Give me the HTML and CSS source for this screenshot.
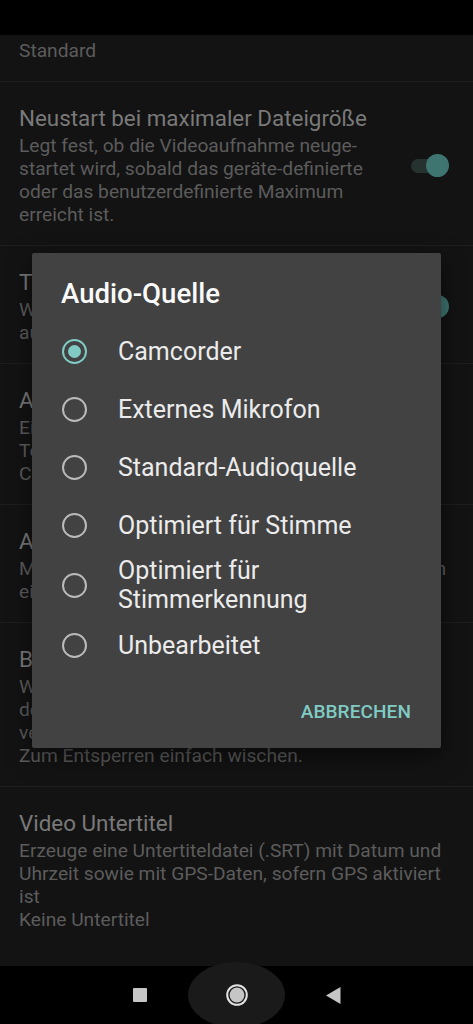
FILE: index.html
```
<!DOCTYPE html>
<html>

<head>
    <meta charset="utf-8" />
    <title>Video-Einstellungen</title>
    <link rel="stylesheet" href="styles.css">
</head>

<body>
    <div class="screen">
        <div class="status-bar"></div>

        <div class="settings">
            <div class="pref pref-tail">
                <div class="pref-text">
                    <p class="pref-summary">Standard</p>
                </div>
            </div>
            <div class="pref">
                <div class="pref-text narrow">
                    <p class="pref-title">Neustart bei maximaler Dateigröße</p>
                    <p class="pref-summary">Legt fest, ob die Videoaufnahme neuge&shy;startet wird, sobald das geräte-definierte oder das benutzerdefinierte Maximum erreicht ist.</p>
                </div>
                <span class="switch on"></span>
            </div>
            <div class="pref">
                <div class="pref-text narrow">
                    <p class="pref-title">Ton aufnehmen</p>
                    <p class="pref-summary">Wenn aktiviert, wird bei der Video-<br>aufnahme auch Ton aufgenommen.</p>
                </div>
                <span class="switch on"></span>
            </div>
            <div class="pref">
                <div class="pref-text">
                    <p class="pref-title">Audio-Quelle</p>
                    <p class="pref-summary">Eingangsquelle für die Tonaufnahme.<br>Teilweise nicht von allen Geräten unterstützt.<br>Camcorder</p>
                </div>
            </div>
            <div class="pref">
                <div class="pref-text">
                    <p class="pref-title">Audiokanäle</p>
                    <p class="pref-summary">Mono oder Stereo. Stereo ist nicht in allen Geräten<br>eingebaut.</p>
                </div>
            </div>
            <div class="pref">
                <div class="pref-text">
                    <p class="pref-title">Bildschirm bei Aufnahme sperren</p>
                    <p class="pref-summary">Wenn aktiviert, wird während der Videoaufnahme<br>der Bildschirm gesperrt, um unbeabsichtigte<br>versehentliche Berührungen zu vermeiden.<br>Zum Entsperren einfach wischen.</p>
                </div>
            </div>
            <div class="pref">
                <div class="pref-text">
                    <p class="pref-title">Video Untertitel</p>
                    <p class="pref-summary">Erzeuge eine Untertiteldatei (.SRT) mit Datum und Uhrzeit sowie mit GPS-Daten, sofern GPS aktiviert ist<br>Keine Untertitel</p>
                </div>
            </div>
        </div>

        <div class="nav-bar">
            <span class="nav-btn">
                <span class="nav-recent"></span>
            </span>
            <span class="nav-btn home">
                <svg width="22" height="22" viewBox="0 0 22 22">
                    <circle cx="11" cy="11" r="9.8" fill="none" stroke="#e2e2e2" stroke-width="2" />
                    <circle cx="11" cy="11" r="7.4" fill="#c6c6c6" />
                </svg>
            </span>
            <span class="nav-btn">
                <svg width="15" height="17" viewBox="0 0 15 17">
                    <polygon points="14.5,0 14.5,17 0,8.5" fill="#c6c6c6" />
                </svg>
            </span>
        </div>

        <!-- Auswahldialog -->
        <div class="dialog">
            <h2 class="dialog-title">Audio-Quelle</h2>
            <ul class="choices">
                <li class="choice"><span class="radio checked"></span>Camcorder</li>
                <li class="choice"><span class="radio"></span>Externes Mikrofon</li>
                <li class="choice"><span class="radio"></span>Standard-Audioquelle</li>
                <li class="choice"><span class="radio"></span>Optimiert für Stimme</li>
                <li class="choice"><span class="radio"></span>Optimiert für<br>Stimmerkennung</li>
                <li class="choice"><span class="radio"></span>Unbearbeitet</li>
            </ul>
            <div class="dialog-buttons">
                <span class="text-btn">ABBRECHEN</span>
            </div>
        </div>
    </div>
</body>

</html>
```

FILE: styles.css
```
body,
p,
h2,
ul,
li {
    margin: 0;
    padding: 0;
}

ul {
    list-style-type: none;
}

body {
    background: #000;
    font-family: Roboto, "Noto Sans", sans-serif;
}

.screen {
    position: relative;
    width: 473px;
    height: 1024px;
    overflow: hidden;
}

.status-bar {
    height: 35px;
    background: #000;
}

/* Einstellungsliste (abgedunkelt hinter dem Dialog) */
.settings {
    height: 931px;
    overflow: hidden;
    background: #131313;
}

.pref {
    display: flex;
    align-items: center;
    padding: 23px 24px 19px 19px;
    border-bottom: 1px solid #1e1e1e;
}

.pref:last-child {
    border-bottom: 0;
}

.pref-tail {
    padding-top: 4px;
}

.pref-text {
    flex: 1;
}

.pref-text.narrow {
    flex: none;
    width: 361px;
    margin-right: auto;
}

.pref-title {
    margin-bottom: 3px;
    font-size: 22.4px;
    line-height: 26px;
    color: #797979;
}

.pref-summary {
    font-size: 19.2px;
    line-height: 23px;
    color: #5c5c5c;
}

.switch {
    position: relative;
    width: 40px;
    height: 24px;
}

.switch::before {
    content: "";
    position: absolute;
    top: 5px;
    left: 2px;
    width: 36px;
    height: 14px;
    border-radius: 7px;
    background: #253230;
}

.switch::after {
    content: "";
    position: absolute;
    top: 0;
    right: 0;
    width: 23px;
    height: 23px;
    border-radius: 50%;
    background: #3e7571;
}

/* Navigationsleiste */
.nav-bar {
    display: flex;
    justify-content: center;
    height: 58px;
    background: #000;
}

.nav-btn {
    position: relative;
    display: flex;
    align-items: center;
    justify-content: center;
    width: 97px;
}

.nav-btn.home::before {
    content: "";
    position: absolute;
    top: -4px;
    left: 0;
    width: 97px;
    height: 66px;
    border-radius: 50%;
    background: #1a1a1a;
}

.nav-btn svg {
    position: relative;
}

.nav-recent {
    width: 14px;
    height: 14px;
    border-radius: 1px;
    background: #c6c6c6;
}

/* Dialog */
.dialog {
    position: absolute;
    top: 253px;
    left: 32px;
    width: 409px;
    padding-top: 24px;
    border-radius: 2px;
    background: #424242;
    box-shadow: 0 8px 24px rgba(0, 0, 0, 0.5);
}

.dialog-title {
    padding-left: 29px;
    font-size: 27.6px;
    font-weight: 500;
    line-height: 33px;
    color: #fafafa;
}

.choices {
    margin-top: 12px;
}

.choice {
    display: flex;
    align-items: center;
    min-height: 58px;
    padding: 2px 0 2px 30px;
    box-sizing: border-box;
    font-size: 25px;
    line-height: 29px;
    color: #ebebeb;
}

.radio {
    display: flex;
    align-items: center;
    justify-content: center;
    flex: none;
    width: 25px;
    height: 25px;
    margin-right: 31px;
    box-sizing: border-box;
    border: 2.6px solid #bababa;
    border-radius: 50%;
}

.radio.checked {
    border-color: #80cbc4;
}

.radio.checked::after {
    content: "";
    width: 13px;
    height: 13px;
    border-radius: 50%;
    background: #80cbc4;
}

.dialog-buttons {
    display: flex;
    justify-content: flex-end;
    padding: 27px 30px 25px 0;
}

.text-btn {
    font-size: 19px;
    font-weight: 500;
    line-height: 22px;
    letter-spacing: 0.1px;
    color: #80cbc4;
}
```
